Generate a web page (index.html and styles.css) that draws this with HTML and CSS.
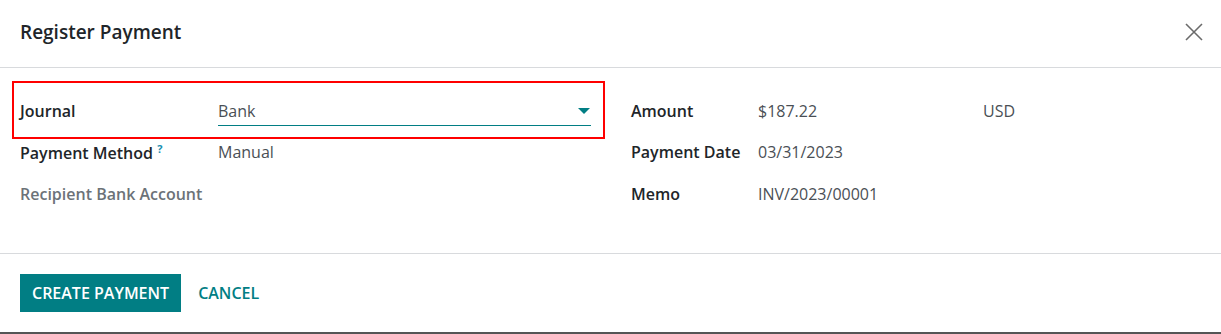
FILE: index.html
```html
<!DOCTYPE html>
<html lang="en">
<head>
  <meta charset="UTF-8">
  <title>Register Payment</title>
  <link rel="stylesheet" href="styles.css">
</head>
<body>
  <div class="modal">
    <header class="modal-header">
      <h4>Register Payment</h4>
      <button class="close" aria-label="Close">
        <svg width="18" height="18" viewBox="0 0 18 18">
          <path d="M1 1 L17 17 M17 1 L1 17" stroke="#6b6b6b" stroke-width="1.6" fill="none"/>
        </svg>
      </button>
    </header>

    <div class="modal-body">
      <div class="group left">
        <div class="highlight"></div>
        <div class="row">
          <label>Journal</label>
          <div class="select">
            <span>Bank</span>
            <span class="caret"></span>
          </div>
        </div>
        <div class="row">
          <label>Payment Method <sup>?</sup></label>
          <span class="value">Manual</span>
        </div>
        <div class="row">
          <label class="muted">Recipient Bank Account</label>
          <span class="value"></span>
        </div>
      </div>

      <div class="group right">
        <div class="row">
          <label>Amount</label>
          <span class="value">$187.22</span>
          <span class="value">USD</span>
        </div>
        <div class="row">
          <label>Payment Date</label>
          <span class="value">03/31/2023</span>
        </div>
        <div class="row">
          <label>Memo</label>
          <span class="value">INV/2023/00001</span>
        </div>
      </div>
    </div>

    <footer class="modal-footer">
      <button class="btn-primary">Create Payment</button>
      <button class="btn-link">Cancel</button>
    </footer>
  </div>
  <div class="backdrop"></div>
</body>
</html>
```

FILE: styles.css
```css
body {
  margin: 0;
  font-family: "Open Sans", Lato, sans-serif;
  font-size: 16px;
  color: #212529;
  background-color: #fff;
}

.modal {
  width: 1221px;
  background-color: #fff;
}

.modal-header {
  display: flex;
  justify-content: space-between;
  align-items: center;
  height: 68px;
  padding: 0 18px 4px 20px;
  box-sizing: border-box;
  border-bottom: 1px solid #d8dadd;
}

.modal-header h4 {
  margin: 0;
  font-size: 19px;
  font-weight: 600;
  color: #212529;
}

.close {
  background: none;
  border: none;
  padding: 0;
  display: flex;
  cursor: pointer;
}

.modal-body {
  display: flex;
  padding: 22px 20px 38px 20px;
}

.group {
  position: relative;
}

.left {
  width: 571px;
  margin-right: 40px;
}

.right {
  flex: 1;
}

.row {
  display: flex;
  align-items: center;
  height: 41.5px;
}

.row label {
  font-weight: 600;
  color: #212529;
  flex-shrink: 0;
}

.left .row label {
  width: 198px;
}

.right .row label {
  width: 127px;
}

.right .row .value:nth-of-type(1) {
  width: 225px;
}

.row label.muted {
  color: #6c7278;
  font-weight: 600;
}

sup {
  color: #1a8fb0;
  font-size: 11px;
  font-weight: 700;
  vertical-align: 6px;
}

.value {
  color: #4a4f55;
}

.select {
  flex: 1;
  display: flex;
  justify-content: space-between;
  align-items: center;
  height: 28px;
  margin-top: 2px;
  border-bottom: 1px solid #017e84;
  color: #4a4f55;
}

.caret {
  width: 0;
  height: 0;
  margin-right: 1px;
  border-left: 6px solid transparent;
  border-right: 6px solid transparent;
  border-top: 6px solid #017e84;
}

.highlight {
  position: absolute;
  left: -8px;
  top: -9px;
  width: 593px;
  height: 58px;
  box-sizing: border-box;
  border: 2px solid #f00;
  pointer-events: none;
}

.modal-footer {
  display: flex;
  align-items: center;
  gap: 5px;
  padding: 20px 20px;
  border-top: 1px solid #d8dadd;
}

.btn-primary,
.btn-link {
  font-family: inherit;
  font-size: 16px;
  font-weight: 600;
  text-transform: uppercase;
  height: 38px;
  padding: 0 12px;
  border: none;
  cursor: pointer;
}

.btn-primary {
  background-color: #017e84;
  color: #fff;
}

.btn-link {
  background: none;
  color: #017e84;
}

.backdrop {
  height: 2px;
  background-color: #555;
}
```
